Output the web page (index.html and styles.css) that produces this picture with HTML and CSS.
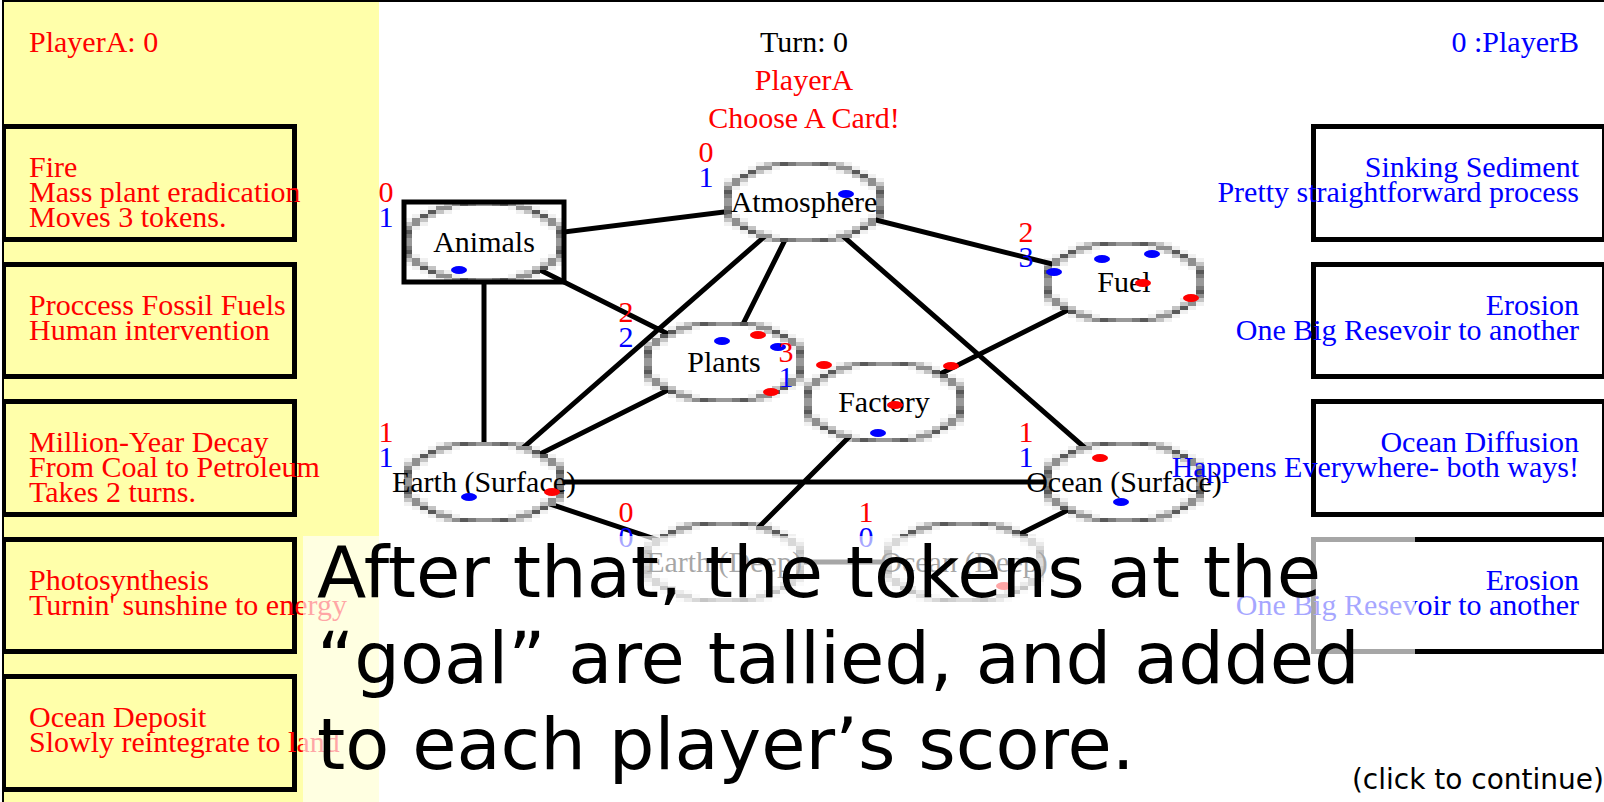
FILE: index.html
```html
<!DOCTYPE html>
<html lang="en">
<head>
<meta charset="utf-8">
<title>Carbon Cycle</title>
<link rel="stylesheet" href="styles.css">
</head>
<body>
<main class="game">
  <svg class="board" viewBox="0 0 1600 800" role="img" aria-label="Reservoir board">
    <defs>
      <g id="ring-quarter">
        <path fill="#fff" d="M7 0h3v10H0V7h1V4h1V3h1V2h1V1h3z"/>
        <path fill-opacity="0.06" d="M4 0h1v1H4zM3 1h1v1H3zM2 2h1v1H2zM1 3h1v1H1zM0 4h1v1H0zM6 1h1v1H6zM5 2h1v1H5zM1 6h1v1H1zM2 5h1v1H2z"/>
        <path fill-opacity="0.23" d="M5 0h1v1H5zM4 2h1v1H4zM3 3h1v1H3zM2 4h1v1H2zM0 5h1v1H0z"/>
        <path fill-opacity="0.44" d="M6 0h1v1H6zM4 1h2v1H4zM1 4h1v2H1zM0 6h1v1H0z"/>
        <path fill-opacity="0.65" d="M7 0h1v1H7zM3 2h1v1H3zM2 3h1v1H2zM0 7h1v1H0z"/>
        <path fill-opacity="0.52" d="M8 0h1v1H8zM0 8h1v1H0z"/>
        <path fill-opacity="0.4" d="M9 0h1v1H9zM0 9h1v1H0z"/>
      </g>
      <g id="ring" transform="scale(8 4)" shape-rendering="crispEdges">
        <use href="#ring-quarter" transform="translate(-10 -10)"/>
        <use href="#ring-quarter" transform="translate(10 -10) scale(-1 1)"/>
        <use href="#ring-quarter" transform="translate(-10 10) scale(1 -1)"/>
        <use href="#ring-quarter" transform="translate(10 10) scale(-1 -1)"/>
      </g>
      <ellipse id="token" rx="8" ry="4"/>
    </defs>

    <g class="paths">
      <path d="M480 240L800 200M480 240L720 360M480 240V480M800 200L720 360M800 200L480 480M800 200L1120 480M800 200L1120 280M1120 280L880 400M880 400L720 560M480 480L720 360M480 480H1120M480 480L720 560M720 560H960M960 560L1120 480"/>
    </g>

    <g transform="translate(800 200)">
      <use href="#ring"/><text class="name" y="10">Atmosphere</text>
      <use class="blue" href="#token" x="42" y="-8"/>
      <text class="red" x="-98" y="-40">0</text><text class="blue" x="-98" y="-15">1</text>
    </g>
    <g transform="translate(480 240)">
      <use href="#ring"/><text class="name" y="10">Animals</text>
      <rect class="selected" x="-80" y="-40" width="160" height="80"/>
      <use class="blue" href="#token" x="-25" y="28"/>
      <text class="red" x="-98" y="-40">0</text><text class="blue" x="-98" y="-15">1</text>
    </g>
    <g transform="translate(1120 280)">
      <use href="#ring"/><text class="name" y="10">Fuel</text>
      <use class="blue" href="#token" x="-22" y="-23"/><use class="blue" href="#token" x="28" y="-28"/>
      <use class="blue" href="#token" x="-70" y="-10"/><use class="red" href="#token" x="19" y="1"/>
      <use class="red" href="#token" x="67" y="16"/>
      <text class="red" x="-98" y="-40">2</text><text class="blue" x="-98" y="-15">3</text>
    </g>
    <g transform="translate(720 360)">
      <use href="#ring"/><text class="name" y="10">Plants</text>
      <use class="blue" href="#token" x="-2" y="-21"/><use class="red" href="#token" x="34" y="-27"/>
      <use class="blue" href="#token" x="54" y="-15"/><use class="red" href="#token" x="47" y="30"/>
      <text class="red" x="-98" y="-40">2</text><text class="blue" x="-98" y="-15">2</text>
    </g>
    <g transform="translate(880 400)">
      <use href="#ring"/><text class="name" y="10">Factory</text>
      <use class="red" href="#token" x="-60" y="-37"/><use class="red" href="#token" x="67" y="-36"/>
      <use class="red" href="#token" x="11" y="3"/><use class="blue" href="#token" x="-6" y="31"/>
      <text class="red" x="-98" y="-40">3</text><text class="blue" x="-98" y="-15">1</text>
    </g>
    <g transform="translate(480 480)">
      <use href="#ring"/><text class="name" y="10">Earth (Surface)</text>
      <use class="blue" href="#token" x="-15" y="15"/><use class="red" href="#token" x="68" y="10"/>
      <text class="red" x="-98" y="-40">1</text><text class="blue" x="-98" y="-15">1</text>
    </g>
    <g transform="translate(1120 480)">
      <use href="#ring"/><text class="name" y="10">Ocean (Surface)</text>
      <use class="red" href="#token" x="-24" y="-24"/><use class="blue" href="#token" x="-3" y="20"/>
      <text class="red" x="-98" y="-40">1</text><text class="blue" x="-98" y="-15">1</text>
    </g>
    <g transform="translate(720 560)">
      <use href="#ring"/><text class="name" y="10">Earth (Deep)</text>
      <text class="red" x="-98" y="-40">0</text><text class="blue" x="-98" y="-15">0</text>
    </g>
    <g transform="translate(960 560)">
      <use href="#ring"/><text class="name" y="10">Ocean (Deep)</text>
      <use class="red" href="#token" x="40" y="24"/>
      <text class="red" x="-98" y="-40">1</text><text class="blue" x="-98" y="-15">0</text>
    </g>
  </svg>

  <section class="player player-a">
    <h2 class="score">PlayerA: 0</h2>
    <div class="hand">
      <button class="card" type="button"><span>Fire</span><span>Mass plant eradication</span><span>Moves 3 tokens.</span></button>
      <button class="card" type="button"><span>Proccess Fossil Fuels</span><span>Human intervention</span></button>
      <button class="card" type="button"><span>Million-Year Decay</span><span>From Coal to Petroleum</span><span>Takes 2 turns.</span></button>
      <button class="card" type="button"><span>Photosynthesis</span><span>Turnin' sunshine to energy</span></button>
      <button class="card" type="button"><span>Ocean Deposit</span><span>Slowly reintegrate to land</span></button>
    </div>
  </section>

  <header class="status">
    <p>Turn: 0</p>
    <p class="prompt">PlayerA</p>
    <p class="prompt">Choose A Card!</p>
  </header>

  <section class="player player-b">
    <h2 class="score">0 :PlayerB</h2>
    <div class="hand">
      <button class="card" type="button"><span>Sinking Sediment</span><span>Pretty straightforward process</span></button>
      <button class="card" type="button"><span>Erosion</span><span>One Big Resevoir to another</span></button>
      <button class="card" type="button"><span>Ocean Diffusion</span><span>Happens Everywhere- both ways!</span></button>
      <button class="card" type="button"><span>Erosion</span><span>One Big Resevoir to another</span></button>
    </div>
  </section>

  <div class="tutorial">
    <p>After that, the tokens at the<br>“goal” are tallied, and added<br>to each player’s score.</p>
  </div>
  <button class="continue" type="button">(click to continue)</button>
</main>
</body>
</html>
```
FILE: styles.css
```css
* { box-sizing: border-box; }

body {
  margin: 0;
  padding-left: 2px;
  background: #fff;
  font-family: "Liberation Serif", "Times New Roman", serif;
  font-size: 30px;
  line-height: 25px;
}

.game {
  position: relative;
  display: grid;
  grid-template-columns: 375px 1fr 375px;
  min-height: 100vh;
  border-top: 2px solid #000;
  border-left: 2px solid #000;
  overflow: hidden;
}

/* The board lies under both hands, across the whole playing field. */
.board {
  position: absolute;
  top: 0;
  left: 0;
  width: 100%;
  height: 100%;
}
.board text { text-anchor: middle; font-size: 30px; }
.name { fill: #000; }
.red { fill: #f00; }
.blue { fill: #00f; }
.paths, .selected { fill: none; stroke: #000; stroke-width: 5px; }

.player {
  display: flex;
  flex-direction: column;
  padding-bottom: 10px;
}
.player-a { background: #ffa; color: #f00; }
.player-b { color: #00f; align-items: flex-end; }

.score, .hand, .status { position: relative; }

.score {
  height: 122px;
  margin: 0;
  padding: 21px 25px 0;
  font-size: 30px;
  font-weight: 400;
  line-height: 38px;
}

.hand {
  flex: 1;
  display: grid;
  grid-template-columns: minmax(0, 1fr);
  grid-template-rows: repeat(5, 1fr);
  gap: 20px;
  width: 293px;
}

.card {
  display: flex;
  flex-direction: column;
  justify-content: flex-start;
  align-items: flex-start;
  padding: 25px 23px 0;
  border: 5px solid #000;
  background: none;
  color: inherit;
  font: inherit;
  white-space: nowrap;
}
.player-a .card { border-left-width: 2px; }
.player-b .card { border-right-width: 2px; align-items: flex-end; }

.status {
  padding-top: 21px;
  text-align: center;
  line-height: 38px;
}
.status p { margin: 0; }
.prompt { color: #f00; }

.tutorial {
  position: absolute;
  top: 534px;
  right: 189px;
  bottom: 0;
  left: 299px;
  padding-left: 14px;
  background: rgba(255, 255, 255, 0.65);
  font-family: Verdana, "DejaVu Sans", sans-serif;
  font-size: 72px;
  line-height: 86px;
  white-space: nowrap;
}
.tutorial p { margin: -7px 0 0; }

.continue {
  position: absolute;
  right: 0;
  bottom: 4px;
  padding: 0;
  border: 0;
  background: none;
  color: #000;
  font-family: Verdana, "DejaVu Sans", sans-serif;
  font-size: 28px;
  line-height: 36px;
}
```
